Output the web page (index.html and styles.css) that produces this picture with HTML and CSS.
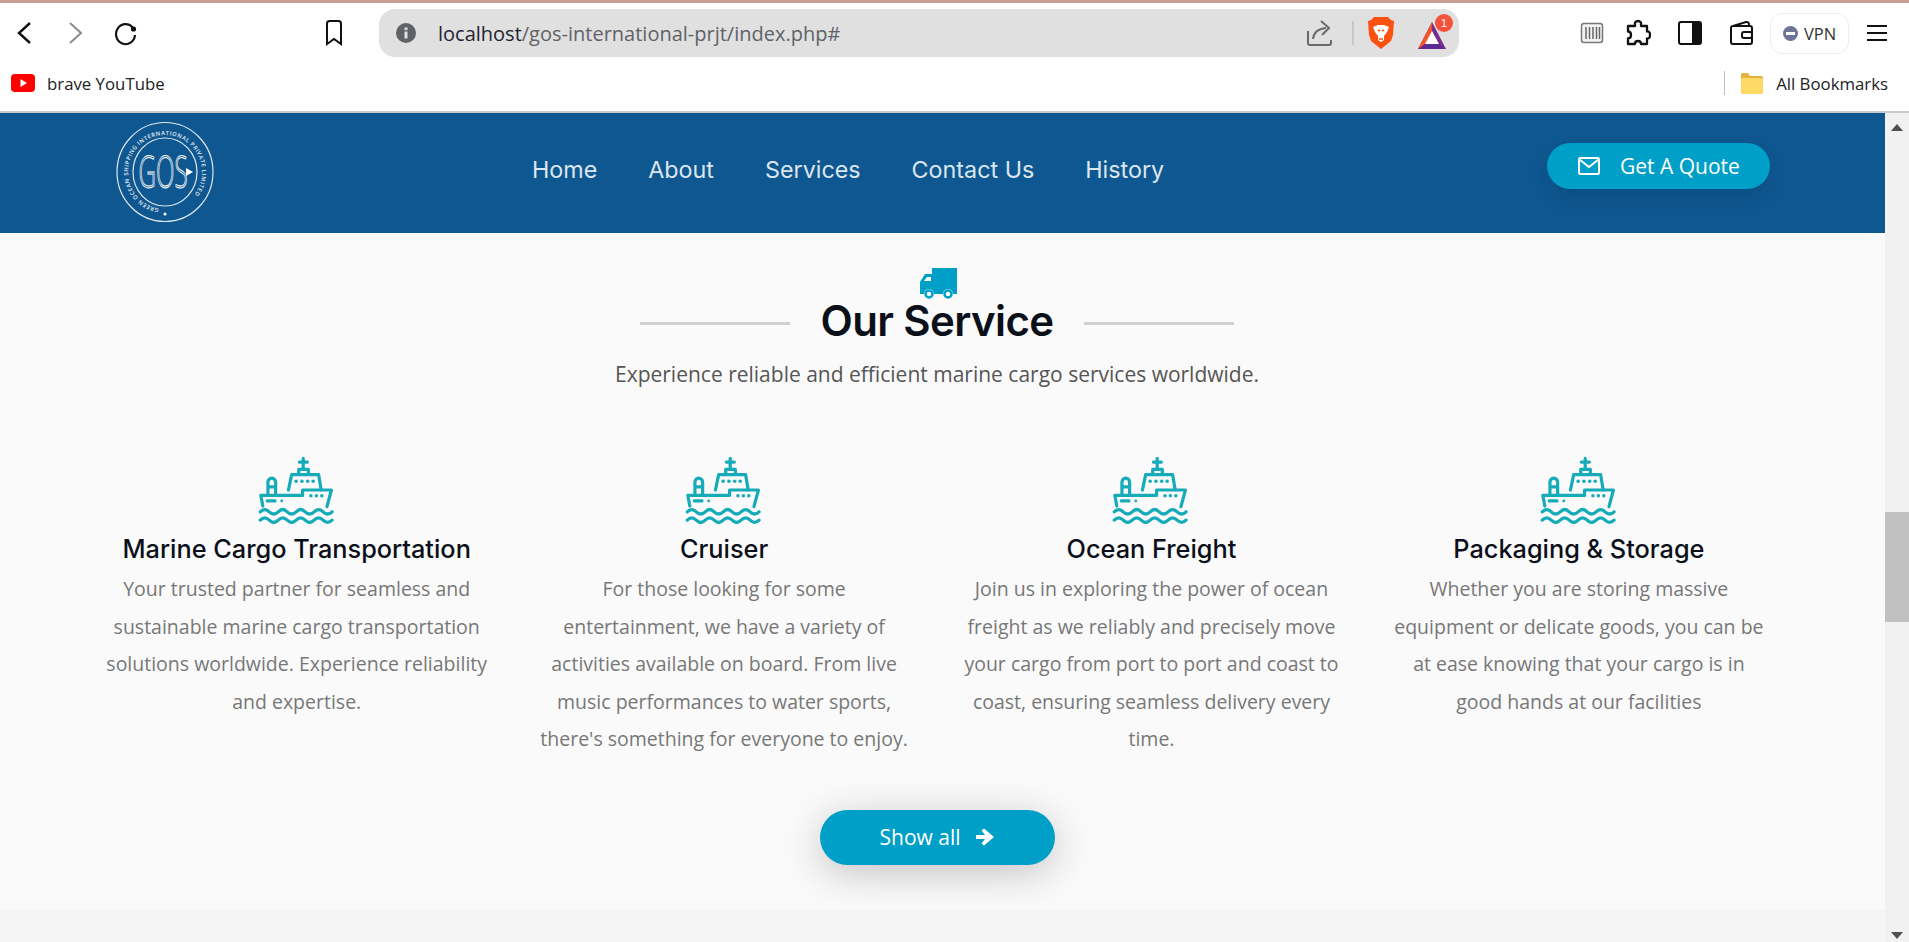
FILE: index.html
```html
<!DOCTYPE html>
<html lang="en">
<head>
<meta charset="utf-8">
<title>GOS International</title>
<link rel="stylesheet" href="styles.css">
</head>
<body>
<svg class="defs" width="0" height="0" aria-hidden="true">
  <symbol id="ship" viewBox="52 20 235 212">
    <g fill="none" stroke="#16abb9" stroke-width="10" stroke-linecap="round" stroke-linejoin="round">
      <path d="M192 27V60M180 39H205"/>
      <path d="M178 76V62H208V76"/>
      <path d="M146 126L156 78H240L248 126"/>
      <path d="M82 142V102a12 13 0 0 1 24 0V142M82 116H106"/>
      <path d="M60 143H190V126H280L266 178M60 143L66 176"/>
      <path d="M80 160H104"/>
      <path d="M58 194q14-14 28 0t28 0t28 0t28 0t28 0t28 0t28 0t28 0"/>
      <path d="M58 220q14-14 28 0t28 0t28 0t28 0t28 0t28 0t28 0t28 0"/>
    </g>
    <g fill="#16abb9">
      <circle cx="170" cy="99" r="5.500"/><circle cx="188" cy="99" r="5.500"/><circle cx="206" cy="99" r="5.500"/><circle cx="223" cy="99" r="5.500"/>
      <circle cx="216" cy="144" r="5.500"/><circle cx="233" cy="144" r="5.500"/><circle cx="250" cy="144" r="5.500"/><circle cx="125" cy="160" r="4.500"/>
    </g>
  </symbol>
</svg>

<div class="strip"></div>

<div class="toolbar">
  <div class="tool-nav">
    <svg class="ico" width="50" height="30" viewBox="0 0 50 30"><path d="M30 5L19 15L30 25" fill="none" stroke="#111" stroke-width="2.400"/></svg>
    <svg class="ico" width="50" height="30" viewBox="0 0 50 30"><path d="M20 5L31 15L20 25" fill="none" stroke="#8a8a8a" stroke-width="2"/></svg>
    <svg class="ico" width="50" height="30" viewBox="0 0 50 30"><path d="M33 10A9.500 10 0 1 0 35 17" fill="none" stroke="#111" stroke-width="2.200"/><circle cx="33.500" cy="11" r="2.600" fill="#111"/></svg>
    <svg class="ico ico-mark" width="30" height="30" viewBox="0 0 30 30"><path d="M8 5.500Q8 3 10.500 3H19.500Q22 3 22 5.500V26L15 21L8 26Z" fill="none" stroke="#111" stroke-width="2"/></svg>
  </div>
  <div class="address">
    <svg class="info" width="22" height="22" viewBox="0 0 22 22"><circle cx="11" cy="11" r="10" fill="#5f6368"/><rect x="9.500" y="9.500" width="3" height="7" fill="#e0e0e0"/><rect x="9.500" y="5.500" width="3" height="2.600" fill="#e0e0e0"/></svg>
    <span class="url"><span class="url-host">localhost</span>/gos-international-prjt/index.php#</span>
    <svg class="ico share" width="28" height="26" viewBox="0 0 28 26"><path d="M2 11V23Q2 25 4 25H23Q25 25 25 23V20" fill="none" stroke="#6a6a6a" stroke-width="2"/><path d="M7 19Q8 9 20 8M15 1L23 8L16 15" fill="none" stroke="#6a6a6a" stroke-width="2"/></svg>
    <span class="addr-sep"></span>
    <svg class="ico brave" width="28" height="34" viewBox="0 0 28 34"><path d="M7 1H21L24 4L27 5L26 19L24 25L14 33L4 25L2 19L1 5L4 4Z" fill="#fb5212"/><path d="M6 11L11 9H17L22 11L20 16L17 20L17 24L14 26L11 24L11 20L8 16Z" fill="#fff"/><path d="M11 14L13 15M17 14L15 15M12 23H16" stroke="#fb5212" stroke-width="1.500"/></svg>
    <span class="bat">
      <svg width="30" height="30" viewBox="0 0 30 30"><path d="M15 1L29 28H1Z" fill="#7b2c8f"/><path d="M15 1L1 28H7L15 13Z" fill="#f0552a"/><path d="M15 10L22 23H8Z" fill="#fff"/><path d="M1 28L8 23H22L29 28Z" fill="#5d2a92"/></svg>
      <span class="badge">1</span>
    </span>
  </div>
  <div class="tool-right">
    <svg class="ico" width="24" height="24" viewBox="0 0 24 24"><rect x="1.500" y="2.500" width="21" height="19" rx="2.500" fill="#f4f4f4" stroke="#777" stroke-width="1.500"/><path d="M6 6V18M9.500 6V18M13 6V18M16.500 6V18M19.500 6V18" stroke="#666" stroke-width="1.500"/></svg>
    <svg class="ico ico-puzzle" width="26" height="28" viewBox="0 0 26 28"><path d="M10 3.500Q13 0.500 16 3.500V7H22V12.500Q25 12 25 16T22 19.500V25H16Q16 22 13 22T10 25H3V19.500Q6 19.500 6 16T3 12.500V7H10Z" fill="none" stroke="#111" stroke-width="2.300" stroke-linejoin="round"/></svg>
    <svg class="ico" width="24" height="26" viewBox="0 0 24 26"><rect x="1" y="2" width="22" height="22" rx="2" fill="#fff" stroke="#111" stroke-width="2"/><rect x="14" y="2" width="9" height="22" fill="#111"/></svg>
    <svg class="ico ico-wallet" width="24" height="26" viewBox="0 0 24 26"><path d="M4 6L17 2Q20 1.500 20 5V7M2 8Q2 6 4 6H21Q23 6 23 8V22Q23 24 21 24H4Q2 24 2 22Z" fill="none" stroke="#111" stroke-width="2"/><rect x="13" y="12" width="10" height="6" rx="2" fill="#fff" stroke="#111" stroke-width="2"/></svg>
    <span class="vpn"><span class="vpn-dot"></span>VPN</span>
    <svg class="ico" width="22" height="20" viewBox="0 0 22 20"><path d="M1 3H21M1 10H21M1 17H21" stroke="#111" stroke-width="2"/></svg>
  </div>
</div>

<div class="bookmarks">
  <span class="bm-item">
    <svg class="ico" width="24" height="18" viewBox="0 0 24 18"><rect width="24" height="18" rx="4" fill="#f00"/><path d="M9.500 5L16 9L9.500 13Z" fill="#fff"/></svg>
    <span>brave YouTube</span>
  </span>
  <span class="bm-right">
    <span class="bm-sep"></span>
    <svg class="ico" width="24" height="24" viewBox="0 0 24 24"><path d="M1 4Q1 2 3 2H8L10 5H21Q23 5 23 7V21Q23 23 21 23H3Q1 23 1 21Z" fill="#e3b341"/><rect x="1" y="7" width="22" height="16" rx="2" fill="#fdd966"/></svg>
    <span>All Bookmarks</span>
  </span>
</div>

<div class="viewport">
  <main class="page">
    <header class="site-header">
      <svg class="logo" width="100" height="102" viewBox="0 0 100 102">
        <defs><path id="logo-arc" d="M50 88A37 37 0 1 1 50.100 88"/></defs>
        <ellipse cx="50" cy="51" rx="48" ry="49.500" fill="none" stroke="#dfe8f0" stroke-width="1.200"/>
        <ellipse cx="50" cy="51" rx="32" ry="34" fill="none" stroke="#dfe8f0" stroke-width="1.200"/>
        <text class="logo-ring"><textPath href="#logo-arc" startOffset="6">GREEN OCEAN SHIPPING INTERNATIONAL PRIVATE LIMITED</textPath></text>
        <text class="logo-mark" text-anchor="middle" transform="translate(48 67) scale(.55 1)">GOS</text>
        <path d="M71 47L78 51L71 55Z" fill="#fff"/>
        <circle cx="50" cy="93" r="1.500" fill="#fff"/>
      </svg>
      <nav class="nav">
        <a>Home</a><a>About</a><a>Services</a><a>Contact Us</a><a>History</a>
      </nav>
      <a class="quote">
        <svg width="24" height="20" viewBox="0 0 24 20"><rect x="2" y="2" width="20" height="16" rx="1.500" fill="none" stroke="#fff" stroke-width="2"/><path d="M2.500 3.500L12 11L21.500 3.500" fill="none" stroke="#fff" stroke-width="2"/></svg>
        <span>Get A Quote</span>
      </a>
    </header>

    <section class="services">
      <svg class="truck" width="37" height="31" viewBox="0 0 37 31">
        <path d="M12 0H37V26H33A5 5 0 0 0 23 26H14A5 5 0 0 0 4 26H0V14L5 6H12Z" fill="#009fc7"/>
        <path d="M4 13L7 9H11V13Z" fill="#fafafa"/>
        <circle cx="9" cy="26" r="3.500" fill="#fafafa" stroke="#009fc7" stroke-width="2.500"/>
        <circle cx="28" cy="26" r="3.500" fill="#fafafa" stroke="#009fc7" stroke-width="2.500"/>
      </svg>
      <div class="heading">
        <span class="rule"></span>
        <h2>Our Service</h2>
        <span class="rule"></span>
      </div>
      <p class="lead">Experience reliable and efficient marine cargo services worldwide.</p>

      <div class="cards">
        <article class="card">
          <svg class="ship" width="76" height="68"><use href="#ship"/></svg>
          <h3>Marine Cargo Transportation</h3>
          <p>Your trusted partner for seamless and sustainable marine cargo transportation solutions worldwide. Experience reliability and expertise.</p>
        </article>
        <article class="card">
          <svg class="ship" width="76" height="68"><use href="#ship"/></svg>
          <h3>Cruiser</h3>
          <p>For those looking for some entertainment, we have a variety of activities available on board. From live music performances to water sports, there's something for everyone to enjoy.</p>
        </article>
        <article class="card">
          <svg class="ship" width="76" height="68"><use href="#ship"/></svg>
          <h3>Ocean Freight</h3>
          <p>Join us in exploring the power of ocean freight as we reliably and precisely move your cargo from port to port and coast to coast, ensuring seamless delivery every time.</p>
        </article>
        <article class="card">
          <svg class="ship" width="76" height="68"><use href="#ship"/></svg>
          <h3>Packaging &amp; Storage</h3>
          <p>Whether you are storing massive equipment or delicate goods, you can be at ease knowing that your cargo is in<br>good hands at our facilities</p>
        </article>
      </div>

      <a class="show-all">
        <span>Show all</span>
        <svg width="20" height="20" viewBox="0 0 20 20"><path d="M1 8H10L6.500 3.500L9 1.500L19 10L9 18.500L6.500 16.500L10 12H1Z" fill="#fff"/></svg>
      </a>
    </section>
    <div class="next-section"></div>
  </main>
  <aside class="scrollbar">
    <span class="arrow-up"></span>
    <span class="thumb"></span>
    <span class="arrow-down"></span>
  </aside>
</div>
</body>
</html>
```

FILE: styles.css
```css
* { box-sizing: border-box; }
html, body { margin: 0; height: 942px; overflow: hidden; }
body { display: flex; flex-direction: column; background: #fff; font-family: "Open Sans", sans-serif; color: #222; }
.defs { position: absolute; }
svg { display: block; flex: none; }

.strip { height: 3px; background: #c89f90; }

.toolbar { height: 62px; display: flex; align-items: center; padding-bottom: 2px; }
.tool-nav { width: 379px; display: flex; align-items: center; }
.ico-mark { margin-left: 169px; }
.address { width: 1080px; height: 48px; background: #e0e0e0; border-radius: 16px; display: flex; align-items: center; padding-left: 16px; }
.url { margin-left: 21px; font-size: 20px; color: #5f6368; flex: 1; }
.url-host { color: #1f2430; }
.share { margin-right: 18px; }
.addr-sep { width: 2px; height: 24px; background: #c8c8c8; margin-right: 13px; }
.bat { position: relative; margin-left: 22px; margin-right: 12px; width: 30px; height: 34px; display: block; padding-top: 5px; }
.badge { position: absolute; top: -2px; right: -6px; width: 18px; height: 18px; border-radius: 50%; background: #f4523b; color: #fff; font: 11px/18px "Liberation Sans", sans-serif; text-align: center; }
.tool-right { flex: 1; display: flex; align-items: center; padding-left: 121px; gap: 24px; }
.ico-puzzle { margin: 0 3px 0 -3px; }
.ico-wallet { margin: 0 -3px 0 3px; }
.vpn { width: 79px; height: 41px; margin-left: -4px; margin-right: -7px; border: 1px solid #ededed; border-radius: 12px; display: flex; align-items: center; justify-content: center; gap: 6px; font-size: 16.500px; color: #333; }
.vpn-dot { width: 15px; height: 15px; border-radius: 50%; background: #6f7396; position: relative; }
.vpn-dot::after { content: ""; position: absolute; left: 3px; right: 3px; top: 6px; height: 3px; background: #fff; }

.bookmarks { height: 46px; display: flex; align-items: center; justify-content: space-between; padding: 0 21px 10px 11px; font-size: 16.800px; color: #222; }
.bm-item { display: flex; align-items: center; gap: 12px; }
.bm-right { display: flex; align-items: center; gap: 12px; }
.bm-sep { width: 1px; height: 24px; background: #bbb; margin-right: 3px; }

.viewport { flex: 1; min-height: 0; display: flex; border-top: 2px solid #c9c9c9; }
.page { flex: 1; min-width: 0; display: flex; flex-direction: column; background: #f5f5f5; }

.site-header { height: 120px; background: #0f5790; display: flex; align-items: center; padding-left: 115px; }
.logo { margin-top: -3px; }
.logo-ring { font: 600 5.700px "Open Sans", sans-serif; fill: #e8eef4; letter-spacing: .6px; }
.logo-mark { font: 300 44px "Open Sans", sans-serif; fill: none; stroke: #fff; stroke-width: 1; }
.nav { display: flex; gap: 51px; margin-left: 317px; margin-top: -7px; font: 400 23.300px Inter, sans-serif; color: #dbe6ef; }
.quote { margin-left: auto; margin-right: 115px; margin-top: -14px; width: 223px; height: 46px; border-radius: 23px; background: #009fc7; color: #fff; display: flex; align-items: center; gap: 19px; padding-left: 30px; font-size: 21px; box-shadow: 0 8px 20px rgba(0, 0, 0, .1); }

.services { height: 677px; background: #fafafa; display: flex; flex-direction: column; align-items: center; padding: 35px 11px 0 0; }
.truck { margin: 0 0 -8px 3px; }
.heading { display: flex; align-items: center; gap: 30px; height: 64px; }
.heading h2 { margin: 0 0 4px; font: 600 42px/60px Inter, sans-serif; color: #0b0f19; letter-spacing: -.6px; white-space: nowrap; }
.rule { width: 150px; height: 3px; background: #cfcfcf; flex: none; }
.lead { margin: 3px 0 0; font-size: 21px; line-height: 32px; color: #555; }

.cards { align-self: flex-start; display: grid; grid-template-columns: repeat(4, 427.400px); margin: 66px 0 0 83px; }
.card { display: flex; flex-direction: column; align-items: center; padding: 0 22px; text-align: center; }
.ship { margin: 0 2px 6px 0; }
.card h3 { margin: 0; font: 500 25.300px/38px Inter, sans-serif; color: #0b0f19; white-space: nowrap; }
.card p { margin: 2px 0 0; font-size: 19.500px; line-height: 37.600px; color: #777; }

.show-all { margin-top: 52px; flex: none; width: 235px; height: 55px; border-radius: 28px; background: #009fc7; color: #fff; display: flex; align-items: center; justify-content: center; gap: 14px; font-size: 21px; box-shadow: 0 8px 40px rgba(0, 0, 0, .22); }
.next-section { flex: 1; background: #f5f5f5; }

.scrollbar { width: 24px; flex: none; background: #f1f1f1; display: flex; flex-direction: column; align-items: center; position: relative; padding-top: 11px; }
.arrow-up { width: 0; height: 0; border-left: 6px solid transparent; border-right: 6px solid transparent; border-bottom: 7px solid #505050; }
.thumb { width: 100%; height: 110px; background: #c1c1c1; margin-top: 381px; }
.arrow-down { position: absolute; bottom: 3px; width: 0; height: 0; border-left: 6px solid transparent; border-right: 6px solid transparent; border-top: 7px solid #505050; }
```
